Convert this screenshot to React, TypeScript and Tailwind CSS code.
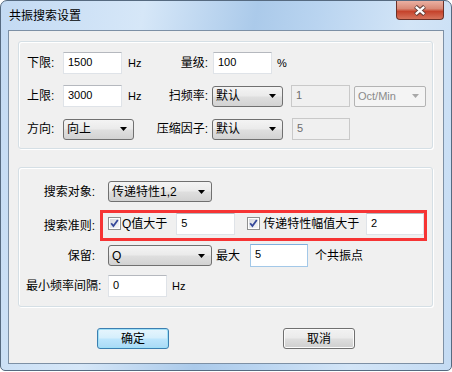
import React from "react";

const FONT = "font-['Liberation_Sans','Noto_Sans_CJK_SC',sans-serif]";

function Arrow({ color = "#000" }: { color?: string }) {
  return (
    <svg width="7" height="4" viewBox="0 0 7 4">
      <path d="M0 0h7L3.5 4z" fill={color} />
    </svg>
  );
}

type EditProps = { value: string; className?: string; focus?: boolean; disabled?: boolean };

function Edit({ value, className = "", focus = false, disabled = false }: EditProps) {
  let look = "bg-white border-[#dfe3e8] border-t-[#b5b8be] text-black";
  if (focus) look = "bg-white border-[#a3c8e8] border-t-[#7fb0de] text-black";
  if (disabled) look = "bg-[#f0f0f0] border-[#c9c9c9] text-[#6d6d6d]";
  return (
    <div className={`h-[22px] shrink-0 border pl-[4px] pt-[3px] text-[11px] leading-[13px] ${look} ${className}`}>
      {value}
    </div>
  );
}

type ComboProps = { value: string; className?: string; disabled?: boolean; small?: boolean };

function Combo({ value, className = "", disabled = false, small = false }: ComboProps) {
  const look = disabled
    ? "rounded-[2px] border-[#b3b3b3] bg-[#f4f4f4] text-[#8a8a8a]"
    : "rounded-[3px] border-[#707070] bg-[linear-gradient(to_bottom,#f4f4f4,#ebebeb_45%,#dedede_55%,#d2d2d2)] text-black";
  return (
    <div
      className={`flex h-[21px] shrink-0 items-center justify-between border pl-[3px] pr-[6px] leading-none ${
        small ? "text-[11px]" : "text-[12px]"
      } ${look} ${className}`}
    >
      <span>{value}</span>
      <Arrow color={disabled ? "#a8a8a8" : "#000"} />
    </div>
  );
}

function Check() {
  return (
    <svg width="13" height="13" viewBox="0 0 13 13" className="shrink-0">
      <defs>
        <linearGradient id="cb" x1="0" y1="0" x2="1" y2="1">
          <stop offset="0" stopColor="#d6d9de" />
          <stop offset="1" stopColor="#f6f7f9" />
        </linearGradient>
      </defs>
      <rect x="0.5" y="0.5" width="12" height="12" fill="#fff" stroke="#8e8f8f" />
      <rect x="2" y="2" width="9" height="9" fill="url(#cb)" />
      <path d="M3.2 6.3L5.4 9L9.8 3" fill="none" stroke="#35489a" strokeWidth="1.8" />
    </svg>
  );
}

function Btn({ label, primary = false }: { label: string; primary?: boolean }) {
  const look = primary
    ? "border-[#3c7fb1] bg-[linear-gradient(to_bottom,#e6f5fd,#d6effc_45%,#bce5fc_55%,#a9daf6)] shadow-[inset_0_0_0_1px_#9fe0f7]"
    : "border-[#707070] bg-[linear-gradient(to_bottom,#f2f2f2,#ebebeb_45%,#dddddd_55%,#cfcfcf)] shadow-[inset_0_0_0_1px_#fbfbfb]";
  return (
    <div className={`flex h-[21px] w-[72px] items-center justify-center rounded-[3px] border text-[12px] leading-none text-black ${look}`}>
      {label}
    </div>
  );
}

export default function App() {
  return (
    <div className={`h-[372px] w-[452px] bg-white ${FONT}`}>
      <div className="flex h-[371px] w-[452px] flex-col rounded-t-[7px] rounded-b-[5px] border border-[#566a80] bg-[linear-gradient(100deg,#c3daf3_0%,#d6e7f8_28%,#abcaea_50%,#b9d4f0_62%,#d3e5f7_80%,#c4dbf3_100%)] px-[7px] pb-[6px]">
        {/* title bar */}
        <div className="flex h-[29px] items-start">
          <div className="pl-[1px] pt-[8px] text-[12px] leading-[14px] text-black">共振搜索设置</div>
          <div className="ml-auto flex h-[19px] w-[48px] items-center justify-center rounded-b-[4px] border border-t-0 border-[#6b3128] bg-[linear-gradient(to_bottom,#eab0a2,#d98a77_42%,#c5432c_58%,#d6745c)]">
            <svg width="14" height="11" viewBox="0 0 14 11">
              <path d="M2.5 1.5L11.5 9.5M11.5 1.5L2.5 9.5" stroke="#5a3a35" strokeWidth="4.2" />
              <path d="M2.8 1.9L11.2 9.1M11.2 1.9L2.8 9.1" stroke="#fff" strokeWidth="2.4" />
            </svg>
          </div>
        </div>

        {/* client area */}
        <div className="flex h-[334px] flex-col border border-[#7d90a5] bg-[#f0f0f0] text-[12px] leading-none text-black">
          {/* group 1 */}
          <div className="ml-[9px] mt-[10px] flex h-[108px] w-[415px] flex-col gap-[11px] rounded-[3px] border border-[#d5dfe5] pl-[8px] pt-[10px] shadow-[inset_1px_1px_0_#fff,1px_1px_0_#fff]">
            <div className="flex h-[22px] items-center">
              <div className="flex w-[123px] items-center">
                <span className="w-[36px]">下限:</span>
                <Edit value="1500" className="w-[59px]" />
                <span className="ml-[6px] text-[11px]">Hz</span>
              </div>
              <span className="w-[58px] text-right">量级:</span>
              <Edit value="100" className="ml-[5px] w-[59px]" />
              <span className="ml-[5px] text-[11px]">%</span>
            </div>
            <div className="flex h-[22px] items-center">
              <div className="flex w-[123px] items-center">
                <span className="w-[36px]">上限:</span>
                <Edit value="3000" className="w-[59px]" />
                <span className="ml-[6px] text-[11px]">Hz</span>
              </div>
              <span className="w-[58px] text-right">扫频率:</span>
              <Combo value="默认" className="ml-[4px] w-[71px]" />
              <Edit value="1" disabled className="ml-[8px] w-[59px]" />
              <Combo value="Oct/Min" disabled small className="ml-[4px] w-[72px]" />
            </div>
            <div className="flex h-[22px] items-center">
              <div className="flex w-[123px] items-center">
                <span className="w-[36px]">方向:</span>
                <Combo value="向上" className="w-[71px]" />
              </div>
              <span className="w-[58px] text-right">压缩因子:</span>
              <Combo value="默认" className="ml-[4px] w-[71px]" />
              <Edit value="5" disabled className="ml-[9px] w-[58px]" />
            </div>
          </div>

          {/* group 2 */}
          <div className="ml-[9px] mt-[18px] flex h-[140px] w-[415px] flex-col rounded-[3px] border border-[#d5dfe5] pt-[13px] shadow-[inset_1px_1px_0_#fff,1px_1px_0_#fff]">
            <div className="flex h-[21px] items-center">
              <span className="w-[76px] text-right">搜索对象:</span>
              <Combo value="传递特性1,2" className="ml-[13px] w-[104px]" />
            </div>
            <div className="mt-[8px] flex h-[31px] items-center">
              <span className="w-[76px] text-right">搜索准则:</span>
              <div className="ml-[5px] flex h-[31px] w-[327px] items-start border-[3px] border-[#f63434] pl-[5px]">
                <div className="mt-[4px] flex items-center">
                  <Check />
                  <span className="ml-[1px]">Q值大于</span>
                </div>
                <Edit value="5" className="ml-[9px] w-[59px]" />
                <div className="ml-[12px] mt-[4px] flex items-center">
                  <Check />
                  <span className="ml-[3px]">传递特性幅值大于</span>
                </div>
                <Edit value="2" className="ml-auto w-[58px]" />
              </div>
            </div>
            <div className="mt-[3px] flex h-[23px] items-center">
              <span className="w-[76px] text-right">保留:</span>
              <Combo value="Q" className="ml-[13px] w-[104px]" />
              <span className="ml-[4px]">最大</span>
              <Edit value="5" focus className="ml-[10px] h-[23px] w-[58px]" />
              <span className="ml-[7px]">个共振点</span>
            </div>
            <div className="mt-[8px] flex h-[22px] items-center">
              <span className="w-[89px] pl-[7px]">最小频率间隔:</span>
              <Edit value="0" className="w-[59px]" />
              <span className="ml-[5px] text-[11px]">Hz</span>
            </div>
          </div>

          {/* buttons */}
          <div className="mt-[21px] flex pl-[88px]">
            <Btn label="确定" primary />
            <div className="ml-[114px]">
              <Btn label="取消" />
            </div>
          </div>
        </div>
      </div>
    </div>
  );
}
